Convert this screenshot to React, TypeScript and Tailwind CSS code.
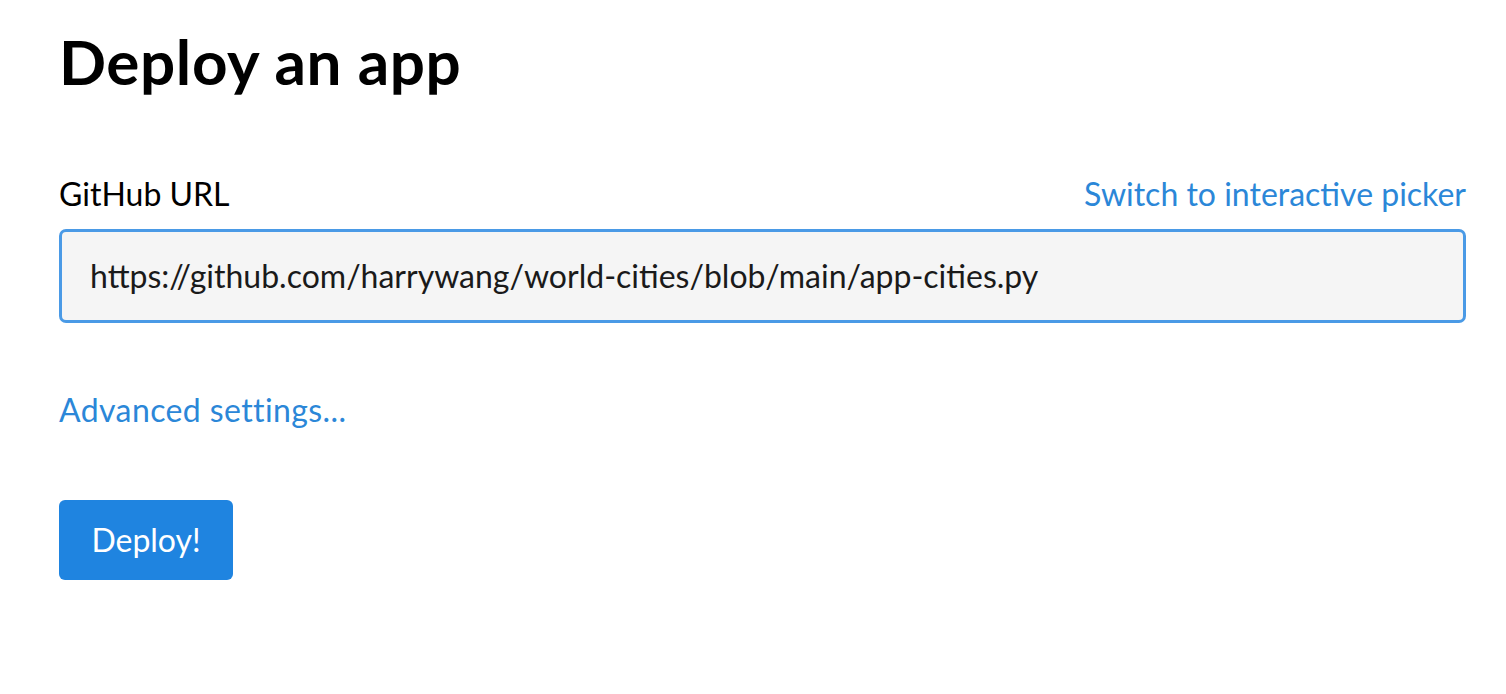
import React from "react";

export default function App() {
  return (
    <div className="min-h-screen bg-white pl-[59px] pr-[40px] pt-[24px] font-['Lato','Noto_Sans',sans-serif] text-black">
      <h1 className="text-[62px] font-bold leading-[75px] tracking-[0.6px]">Deploy an app</h1>

      <div className="mt-[75px] flex items-baseline justify-between text-[32px] leading-[40px]">
        <label>GitHub URL</label>
        <a className="text-[#2b87d8]">Switch to interactive picker</a>
      </div>

      <div className="mt-[15px] flex h-[94px] items-center rounded-[7px] border-[3px] border-[#4a9ae6] bg-[#f5f5f5] pl-[28px]">
        <span className="text-[32px] text-[#1a1a1a]">https://github.com/harrywang/world-cities/blob/main/app-cities.py</span>
      </div>

      <div className="mt-[67px] text-[32px] leading-[40px]">
        <a className="tracking-[0.4px] text-[#2b87d8]">Advanced settings...</a>
      </div>

      <button className="mt-[70px] flex h-[80px] w-[174px] items-center justify-center rounded-[6px] bg-[#1f84e0] text-[32px] text-white">
        Deploy!
      </button>
    </div>
  );
}
